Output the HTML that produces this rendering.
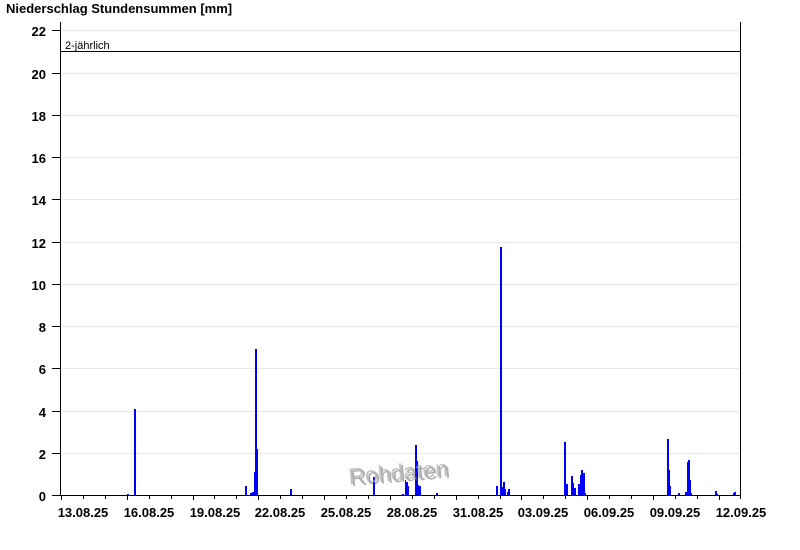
<!DOCTYPE html>
<html><head><meta charset="utf-8"><style>
html,body{margin:0;padding:0;background:#fff;width:800px;height:550px;overflow:hidden}
svg{display:block}
text{font-family:"Liberation Sans",Arial,sans-serif}
</style></head><body>
<svg width="800" height="550" viewBox="0 0 800 550" xmlns="http://www.w3.org/2000/svg">
<text x="6" y="13" font-size="13" font-weight="bold" fill="#000">Niederschlag Stundensummen [mm]</text>
<g stroke="#e8e8e8" stroke-width="1">
<line x1="61" y1="30.5" x2="740" y2="30.5"/>
<line x1="61" y1="73.5" x2="740" y2="73.5"/>
<line x1="61" y1="115.5" x2="740" y2="115.5"/>
<line x1="61" y1="157.5" x2="740" y2="157.5"/>
<line x1="61" y1="199.5" x2="740" y2="199.5"/>
<line x1="61" y1="242.5" x2="740" y2="242.5"/>
<line x1="61" y1="284.5" x2="740" y2="284.5"/>
<line x1="61" y1="326.5" x2="740" y2="326.5"/>
<line x1="61" y1="368.5" x2="740" y2="368.5"/>
<line x1="61" y1="411.5" x2="740" y2="411.5"/>
<line x1="61" y1="453.5" x2="740" y2="453.5"/>
</g>
<g font-size="13" font-weight="bold" fill="#000" text-anchor="end">
<text x="46" y="36">22</text><text x="46" y="79">20</text><text x="46" y="121">18</text>
<text x="46" y="163">16</text><text x="46" y="205">14</text><text x="46" y="248">12</text>
<text x="46" y="290">10</text><text x="46" y="332">8</text><text x="46" y="374">6</text>
<text x="46" y="417">4</text><text x="46" y="459">2</text><text x="46" y="501">0</text>
</g>
<path stroke="#000" stroke-width="1" d="M52 30.5h9M52 73.5h9M52 115.5h9M52 157.5h9M52 199.5h9M52 242.5h9M52 284.5h9M52 326.5h9M52 368.5h9M52 411.5h9M52 453.5h9M52 495.5h9"/>
<g fill="#0000ff">
<rect x="127" y="494" width="2" height="1"/>
<rect x="134" y="409" width="2" height="86"/>
<rect x="245" y="486" width="2" height="9"/>
<rect x="250" y="493" width="2" height="2"/>
<rect x="252" y="492" width="2" height="3"/>
<rect x="254" y="472" width="1" height="23"/>
<rect x="255" y="349" width="2" height="146"/>
<rect x="257" y="449" width="1" height="46"/>
<rect x="290" y="489" width="2" height="6"/>
<rect x="373" y="477" width="2" height="18"/>
<rect x="402" y="494" width="2" height="1"/>
<rect x="405" y="480" width="1" height="15"/>
<rect x="406" y="482" width="2" height="13"/>
<rect x="408" y="486" width="1" height="9"/>
<rect x="415" y="445" width="2" height="50"/>
<rect x="417" y="461" width="1" height="34"/>
<rect x="418" y="485" width="1" height="10"/>
<rect x="419" y="486" width="2" height="9"/>
<rect x="436" y="493" width="2" height="2"/>
<rect x="496" y="486" width="2" height="9"/>
<rect x="500" y="247" width="2" height="248"/>
<rect x="502" y="487" width="1" height="8"/>
<rect x="503" y="482" width="2" height="13"/>
<rect x="505" y="489" width="1" height="6"/>
<rect x="507" y="492" width="1" height="3"/>
<rect x="508" y="489" width="2" height="6"/>
<rect x="564" y="442" width="2" height="53"/>
<rect x="566" y="484" width="2" height="11"/>
<rect x="571" y="476" width="2" height="19"/>
<rect x="573" y="483" width="1" height="12"/>
<rect x="574" y="488" width="2" height="7"/>
<rect x="578" y="484" width="2" height="11"/>
<rect x="580" y="475" width="1" height="20"/>
<rect x="581" y="470" width="2" height="25"/>
<rect x="583" y="473" width="2" height="22"/>
<rect x="585" y="493" width="1" height="2"/>
<rect x="667" y="439" width="2" height="56"/>
<rect x="669" y="470" width="1" height="25"/>
<rect x="670" y="486" width="1" height="9"/>
<rect x="678" y="493" width="2" height="2"/>
<rect x="685" y="492" width="2" height="3"/>
<rect x="687" y="462" width="1" height="33"/>
<rect x="688" y="460" width="2" height="35"/>
<rect x="690" y="480" width="1" height="15"/>
<rect x="691" y="493" width="1" height="2"/>
<rect x="715" y="491" width="2" height="4"/>
<rect x="717" y="494" width="1" height="1"/>
<rect x="733" y="493" width="1" height="2"/>
<rect x="734" y="492" width="2" height="3"/>
</g>
<line x1="61" y1="51.5" x2="740" y2="51.5" stroke="#000" stroke-width="1"/>
<text x="65" y="49" font-size="11" fill="#000">2-jährlich</text>
<path stroke="#000" stroke-width="1" d="M60.5 22V496M740.5 22V496M60 495.5H741"/>
<path stroke="#000" stroke-width="1" d="M61.5 495v5M83.5 495v4M105.5 495v4M127.5 495v5M149.5 495v4M171.5 495v4M193.5 495v5M214.5 495v4M236.5 495v4M258.5 495v5M280.5 495v4M302.5 495v4M324.5 495v5M346.5 495v4M368.5 495v4M390.5 495v5M412.5 495v4M434.5 495v4M456.5 495v5M478.5 495v4M500.5 495v4M521.5 495v5M543.5 495v4M565.5 495v4M587.5 495v5M609.5 495v4M631.5 495v4M653.5 495v5M675.5 495v4M697.5 495v4M719.5 495v5M740.5 495v4"/>
<g font-size="13" font-weight="bold" fill="#000" text-anchor="middle">
<text x="83" y="517">13.08.25</text><text x="149" y="517">16.08.25</text>
<text x="215" y="517">19.08.25</text><text x="280" y="517">22.08.25</text>
<text x="346" y="517">25.08.25</text><text x="412" y="517">28.08.25</text>
<text x="478" y="517">31.08.25</text><text x="543" y="517">03.09.25</text>
<text x="609" y="517">06.09.25</text><text x="675" y="517">09.09.25</text>
<text x="741" y="517">12.09.25</text>
</g>
<g transform="rotate(-5 400 470)" font-size="23">
<text x="350" y="482" fill="#555" opacity="0.45">Rohdaten</text>
<text x="348" y="480" fill="#aaa" opacity="0.7">Rohdaten</text>
</g>
</svg>
</body></html>
